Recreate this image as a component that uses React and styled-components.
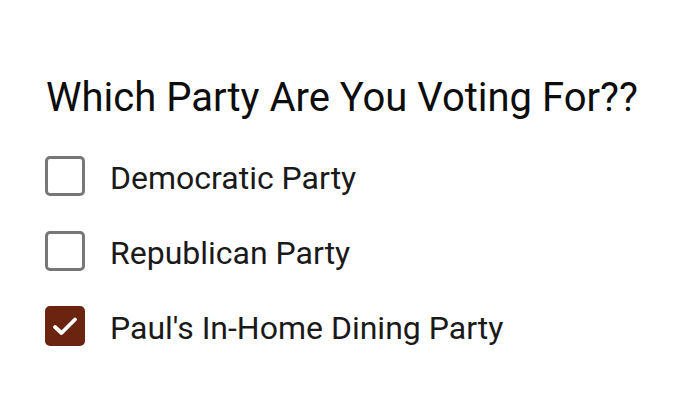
import React, { useState } from "react";
import styled, { createGlobalStyle } from "styled-components";

const Global = createGlobalStyle`
  html, body { margin: 0; padding: 0; background: #fff; }
  body { font-family: Roboto, "Liberation Sans", sans-serif; color: #111; }
`;

const Page = styled.div`
  padding: 73px 0 0 45px;
`;

const Title = styled.h1`
  margin: 0 0 33px 1px;
  font-size: 40px;
  font-weight: 400;
  line-height: 50px;
  color: #0d0d0d;
`;

const List = styled.div`
  display: flex;
  flex-direction: column;
  gap: 35px;
`;

const Row = styled.label`
  display: flex;
  align-items: center;
  gap: 25px;
  height: 40px;
  cursor: pointer;
`;

const Box = styled.span`
  box-sizing: border-box;
  flex: none;
  width: 40px;
  height: 40px;
  border-radius: 5px;
  border: 3px solid ${(p) => (p.$checked ? "#6b2410" : "#777")};
  background: ${(p) => (p.$checked ? "#6b2410" : "#fff")};
  display: flex;
  align-items: center;
  justify-content: center;
`;

const Label = styled.span`
  font-size: 32px;
  padding-top: 3px;
  color: #1a1a1a;
`;

const options = [
  { label: "Democratic Party", checked: false },
  { label: "Republican Party", checked: false },
  { label: "Paul's In-Home Dining Party", checked: true },
];

export default function App() {
  const [state, setState] = useState(options.map((o) => o.checked));
  return (
    <Page>
      <Global />
      <Title>Which Party Are You Voting For??</Title>
      <List>
        {options.map((o, i) => (
          <Row key={o.label} onClick={() => setState((s) => s.map((v, j) => (j === i ? !v : v)))}>
            <Box $checked={state[i]}>
              {state[i] && (
                <svg width="30" height="30" viewBox="0 0 30 30">
                  <path d="M5 16 L11.5 22 L25 8.5" fill="none" stroke="#fff" strokeWidth="3.8" strokeLinecap="round" strokeLinejoin="round" />
                </svg>
              )}
            </Box>
            <Label>{o.label}</Label>
          </Row>
        ))}
      </List>
    </Page>
  );
}
